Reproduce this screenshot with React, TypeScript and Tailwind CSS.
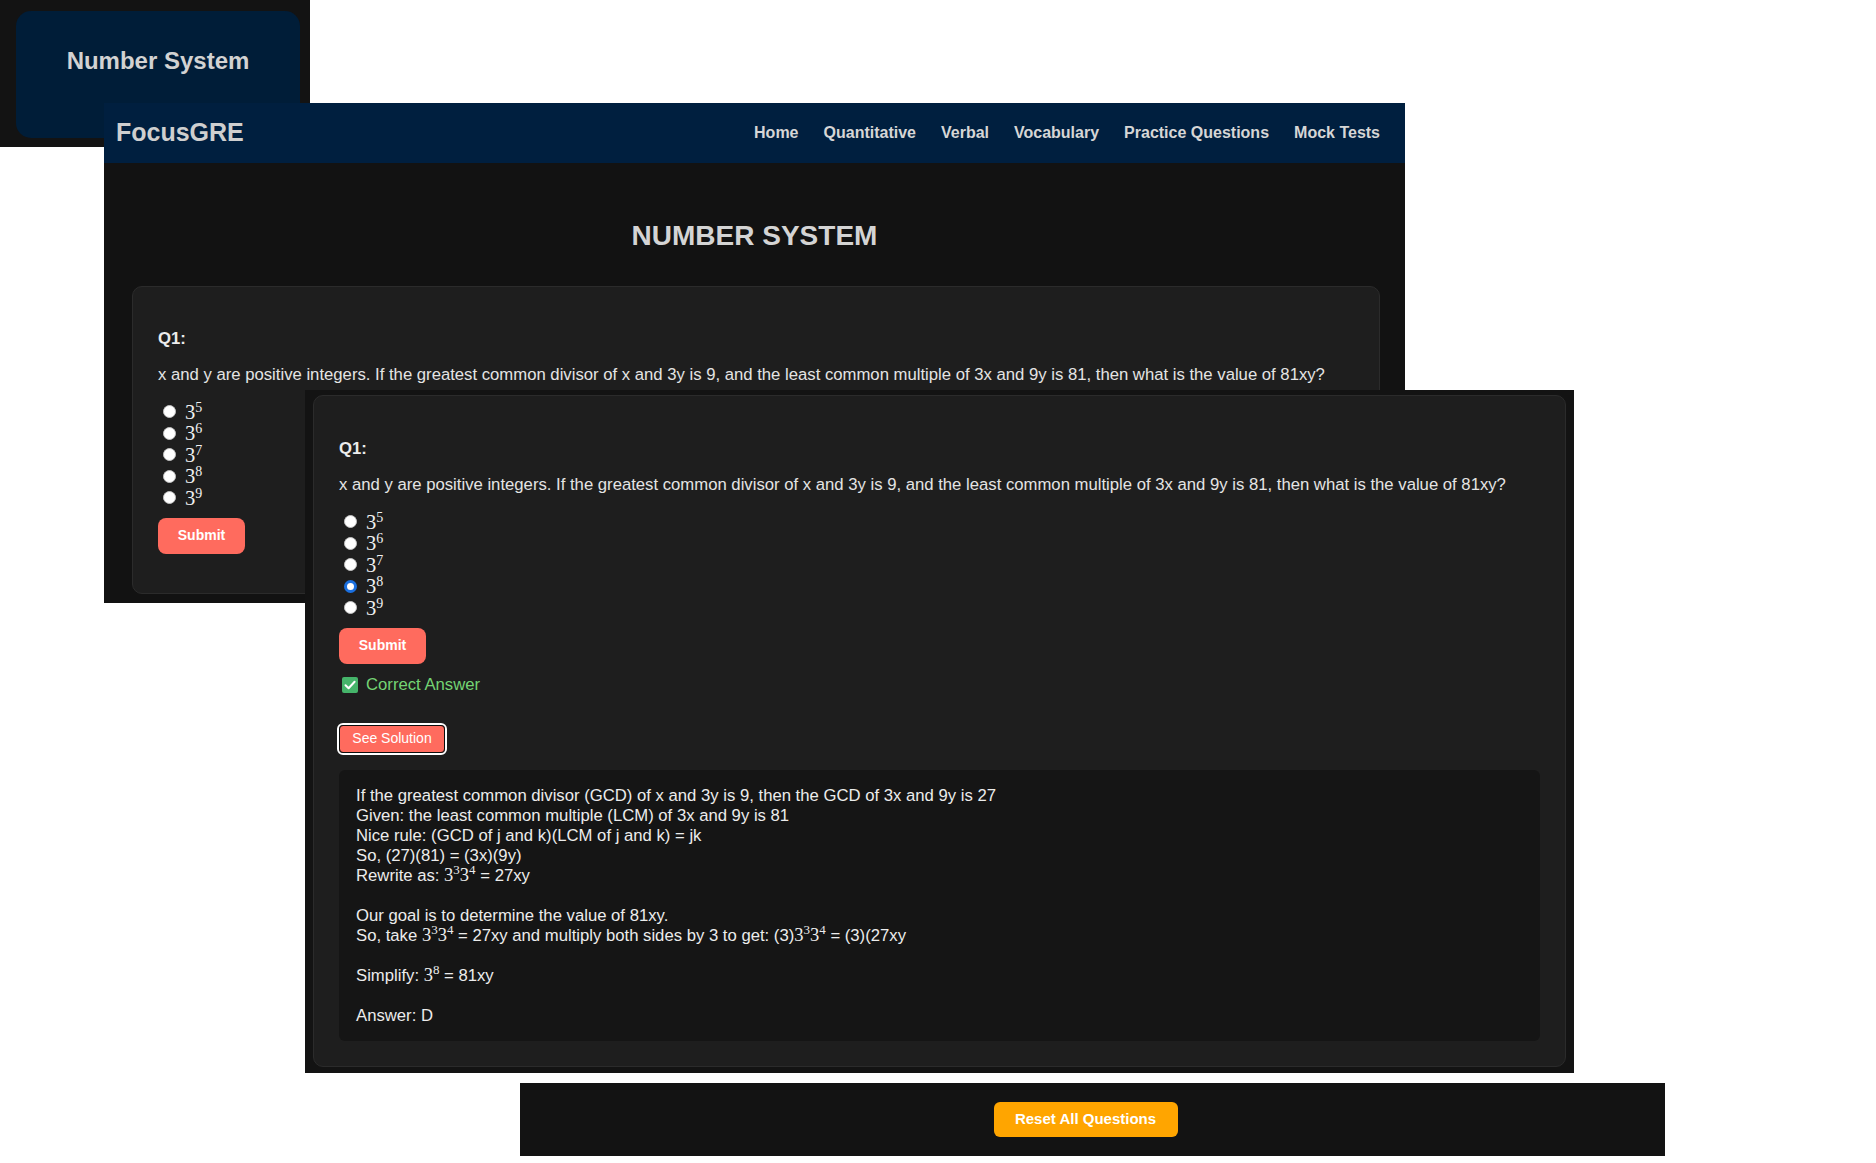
import React from 'react';

const navLinks = ['Home', 'Quantitative', 'Verbal', 'Vocabulary', 'Practice Questions', 'Mock Tests'];
const exponents = ['5', '6', '7', '8', '9'];
const questionText =
  'x and y are positive integers. If the greatest common divisor of x and 3y is 9, and the least common multiple of 3x and 9y is 81, then what is the value of 81xy?';

function Pow({ b, e, big = false }: { b: string; e: string; big?: boolean }) {
  return (
    <span className={big ? "font-['Liberation_Serif',serif] text-[20.5px] leading-none" : "font-['Liberation_Serif',serif] text-[18.5px] leading-none"}>
      {b}
      <sup className={big ? 'text-[14px]' : 'text-[13px]'}>{e}</sup>
    </span>
  );
}

function Radio({ checked }: { checked: boolean }) {
  if (checked) {
    return <span className="ml-[5px] mr-[9px] w-[13px] h-[13px] shrink-0 rounded-full border-[3px] border-[#1a6fdf] bg-white" />;
  }
  return <span className="ml-[5px] mr-[9px] w-[13px] h-[13px] shrink-0 rounded-full border border-[#c4c4c4] bg-white" />;
}

function QuestionCard({ selected, spacing, children }: { selected?: string; spacing: string; children?: React.ReactNode }) {
  return (
    <div className={`rounded-[10px] border border-[#2b2b2b] bg-[#1e1e1e] px-[25px] ${spacing}`}>
      <h3 className="text-[16.7px] leading-[18px] font-bold text-[#ececec]">Q1:</h3>
      <p className="mt-[18px] text-[16.7px] leading-[18px] text-[#e4e4e4]">{questionText}</p>
      <div className="mt-[17px] flex flex-col">
        {exponents.map(e => (
          <label key={e} className="flex h-[21.5px] items-center text-[#f0f0f0]">
            <Radio checked={selected === e} />
            <Pow b="3" e={e} big />
          </label>
        ))}
      </div>
      <button className="mt-[9px] h-[36px] w-[87px] rounded-[8px] bg-[#ff6b5e] text-[14px] font-bold text-white">
        Submit
      </button>
      {children}
    </div>
  );
}

function CheckIcon() {
  return (
    <svg width="16" height="16" viewBox="0 0 16 16" className="shrink-0">
      <rect x="0" y="0" width="16" height="16" rx="2" fill="#45b46a" />
      <path d="M3.5 8.2 L6.6 11.2 L12.6 4.8" stroke="#ffffff" strokeWidth="2" fill="none" strokeLinecap="round" strokeLinejoin="round" />
    </svg>
  );
}

export default function App() {
  return (
    <div className="relative w-[1876px] h-[1163px] overflow-hidden bg-white font-['Liberation_Sans',Arial,sans-serif]">
      {/* topic tile */}
      <div className="absolute left-0 top-0 w-[310px] h-[147px] bg-[#131313] pl-[16px] pr-[10px] pt-[11px]">
        <div className="h-[127px] rounded-[15px] bg-[#001d38] pt-[36px] text-center">
          <h2 className="text-[24px] leading-[28px] font-bold text-[#d2d2d2]">Number System</h2>
        </div>
      </div>

      {/* page with navbar */}
      <div className="absolute left-[104px] top-[103px] w-[1301px] h-[500px] bg-[#121212] flex flex-col">
        <nav className="h-[60px] shrink-0 bg-[#001f3f] flex items-center justify-between pl-[12px] pr-[25px]">
          <span className="text-[25px] font-bold text-[#cfcfcf]">FocusGRE</span>
          <ul className="flex gap-[25px]">
            {navLinks.map(l => (
              <li key={l} className="text-[16px] font-bold text-[#d6d6d6]">{l}</li>
            ))}
          </ul>
        </nav>
        <div className="pt-[57px]">
          <h1 className="text-center text-[28px] leading-[32px] font-bold text-[#d4d4d4]">NUMBER SYSTEM</h1>
          <div className="mt-[34px] ml-[28px] mr-[25px]">
            <QuestionCard spacing="pt-[43px] pb-[39px]" />
          </div>
        </div>
      </div>

      {/* answered question */}
      <div className="absolute left-[305px] top-[390px] w-[1269px] bg-[#131313] px-[8px] pt-[5px] pb-[6px]">
        <QuestionCard selected="8" spacing="pt-[44px] pb-[25px]">
          <div className="mt-[12px] flex h-[18px] items-center gap-[8px] pl-[3px]">
            <CheckIcon />
            <span className="text-[16.7px] text-[#74d474]">Correct Answer</span>
          </div>
          <div className="mt-[29px] -ml-[2px] flex">
            <span className="rounded-[6px] border-2 border-white">
              <button className="h-[28px] w-[106px] rounded-[4px] border border-[#0c0c0c] bg-[#ff6b5e] text-[14px] text-white">
                See Solution
              </button>
            </span>
          </div>
          <div className="mt-[15px] rounded-[6px] bg-[#151515] px-[17px] pt-[16px] pb-[15px] text-[16.7px] leading-[20px] text-[#ececec]">
            <p>If the greatest common divisor (GCD) of x and 3y is 9, then the GCD of 3x and 9y is 27</p>
            <p>Given: the least common multiple (LCM) of 3x and 9y is 81</p>
            <p>Nice rule: (GCD of j and k)(LCM of j and k) = jk</p>
            <p>So, (27)(81) = (3x)(9y)</p>
            <p>
              Rewrite as: <Pow b="3" e="3" />
              <Pow b="3" e="4" /> = 27xy
            </p>
            <p className="h-[20px]" />
            <p>Our goal is to determine the value of 81xy.</p>
            <p>
              So, take <Pow b="3" e="3" />
              <Pow b="3" e="4" /> = 27xy and multiply both sides by 3 to get: (3)
              <Pow b="3" e="3" />
              <Pow b="3" e="4" /> = (3)(27xy
            </p>
            <p className="h-[20px]" />
            <p>
              Simplify: <Pow b="3" e="8" /> = 81xy
            </p>
            <p className="h-[20px]" />
            <p>Answer: D</p>
          </div>
        </QuestionCard>
      </div>

      {/* reset bar */}
      <div className="absolute left-[520px] top-[1083px] w-[1145px] h-[73px] bg-[#131313] flex items-center justify-center pr-[14px]">
        <button className="h-[35px] w-[184px] rounded-[6px] bg-[#ffa500] text-[15px] font-bold text-white">
          Reset All Questions
        </button>
      </div>
    </div>
  );
}
